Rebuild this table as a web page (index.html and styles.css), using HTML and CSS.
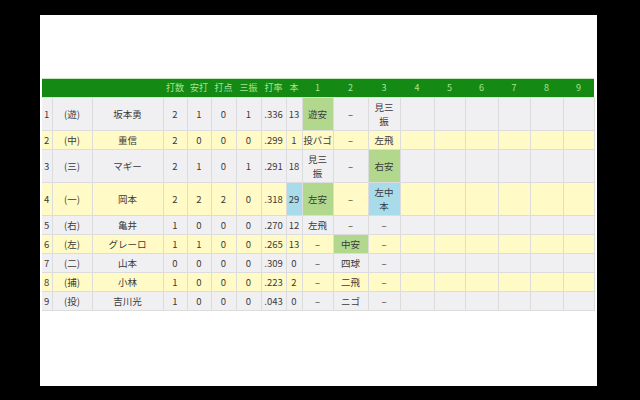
FILE: index.html
```html
<!DOCTYPE html>
<html lang="ja">
<head>
<meta charset="utf-8">
<link rel="stylesheet" href="styles.css">
</head>
<body>
<div class="panel">
<table class="score">
<colgroup>
<col class="c-num"><col class="c-pos"><col class="c-name">
<col class="c-s"><col class="c-s"><col class="c-s2"><col class="c-s2"><col class="c-s2"><col class="c-hr">
<col class="c-i1"><col class="c-i2"><col class="c-i3"><col class="c-i4"><col class="c-i5"><col class="c-i6"><col class="c-i7"><col class="c-i8"><col class="c-i9">
</colgroup>
<thead>
<tr><th></th><th></th><th></th><th>打数</th><th>安打</th><th>打点</th><th>三振</th><th>打率</th><th>本</th><th>1</th><th>2</th><th>3</th><th>4</th><th>5</th><th>6</th><th>7</th><th>8</th><th>9</th></tr>
</thead>
<tbody>
<tr class="g"><td class="num">1</td><td>(遊)</td><td>坂本勇</td><td>2</td><td>1</td><td>0</td><td>1</td><td>.336</td><td>13</td><td class="hit">遊安</td><td>–</td><td>見三<br>振</td><td></td><td></td><td></td><td></td><td></td><td></td></tr>
<tr class="y"><td class="num">2</td><td>(中)</td><td>重信</td><td>2</td><td>0</td><td>0</td><td>0</td><td>.299</td><td>1</td><td>投バゴ</td><td>–</td><td>左飛</td><td></td><td></td><td></td><td></td><td></td><td></td></tr>
<tr class="g"><td class="num">3</td><td>(三)</td><td>マギー</td><td>2</td><td>1</td><td>0</td><td>1</td><td>.291</td><td>18</td><td>見三<br>振</td><td>–</td><td class="hit">右安</td><td></td><td></td><td></td><td></td><td></td><td></td></tr>
<tr class="y tall"><td class="num">4</td><td>(一)</td><td>岡本</td><td>2</td><td>2</td><td>2</td><td>0</td><td>.318</td><td class="hr">29</td><td class="hit">左安</td><td>–</td><td class="hr">左中<br>本</td><td></td><td></td><td></td><td></td><td></td><td></td></tr>
<tr class="g"><td class="num">5</td><td>(右)</td><td>亀井</td><td>1</td><td>0</td><td>0</td><td>0</td><td>.270</td><td>12</td><td>左飛</td><td>–</td><td>–</td><td></td><td></td><td></td><td></td><td></td><td></td></tr>
<tr class="y"><td class="num">6</td><td>(左)</td><td>グレーロ</td><td>1</td><td>1</td><td>0</td><td>0</td><td>.265</td><td>13</td><td>–</td><td class="hit">中安</td><td>–</td><td></td><td></td><td></td><td></td><td></td><td></td></tr>
<tr class="g"><td class="num">7</td><td>(二)</td><td>山本</td><td>0</td><td>0</td><td>0</td><td>0</td><td>.309</td><td>0</td><td>–</td><td>四球</td><td>–</td><td></td><td></td><td></td><td></td><td></td><td></td></tr>
<tr class="y"><td class="num">8</td><td>(捕)</td><td>小林</td><td>1</td><td>0</td><td>0</td><td>0</td><td>.223</td><td>2</td><td>–</td><td>二飛</td><td>–</td><td></td><td></td><td></td><td></td><td></td><td></td></tr>
<tr class="g"><td class="num">9</td><td>(投)</td><td>吉川光</td><td>1</td><td>0</td><td>0</td><td>0</td><td>.043</td><td>0</td><td>–</td><td>ニゴ</td><td>–</td><td></td><td></td><td></td><td></td><td></td><td></td></tr>
</tbody>
</table>
</div>
</body>
</html>
```
FILE: styles.css
```css
html, body {
  margin: 0;
  padding: 0;
  background: #000;
}
body {
  width: 640px;
  height: 400px;
  overflow: hidden;
}
.panel {
  margin: 15px 0 0 40px;
  width: 557px;
  height: 371px;
  background: #fff;
  padding-top: 63px;
  box-sizing: border-box;
}
.score {
  margin-left: 2px;
  width: 552px;
  table-layout: fixed;
  border-collapse: collapse;
  font-family: "Noto Sans CJK JP", "Liberation Sans", sans-serif;
  font-size: 9.5px;
  color: #3a3a3a;
}
.c-num { width: 10px; }
.c-pos { width: 40px; }
.c-name { width: 71px; }
.c-s { width: 24px; }
.c-s2 { width: 25px; }
.c-hr { width: 16px; }
.c-i1 { width: 31px; }
.c-i2 { width: 35px; }
.c-i3 { width: 32px; }
.c-i4 { width: 34px; }
.c-i5 { width: 31px; }
.c-i6 { width: 33px; }
.c-i7 { width: 32px; }
.c-i8 { width: 33px; }
.c-i9 { width: 31px; }
thead tr {
  background: #148a14;
  border-top: 1px solid #c6e6bc;
}
th {
  height: 18px;
  padding: 0;
  font-weight: normal;
  color: #a6e592;
  font-size: 9px;
  text-align: center;
  line-height: 18px;
}
td {
  border: 1px solid #dcdcdc;
  padding: 2px 0;
  height: 14px;
  line-height: 14px;
  text-align: center;
  white-space: nowrap;
}
td.num {
  text-align: left;
  padding-left: 2px;
  border-left: none;
}
tr.g td { background: #f0f0f2; }
tr.y td { background: #fffac6; }
tr.g td.hit, tr.y td.hit { background: #b2d88e; }
tr.g td.hr, tr.y td.hr { background: #a9dceb; }
```
